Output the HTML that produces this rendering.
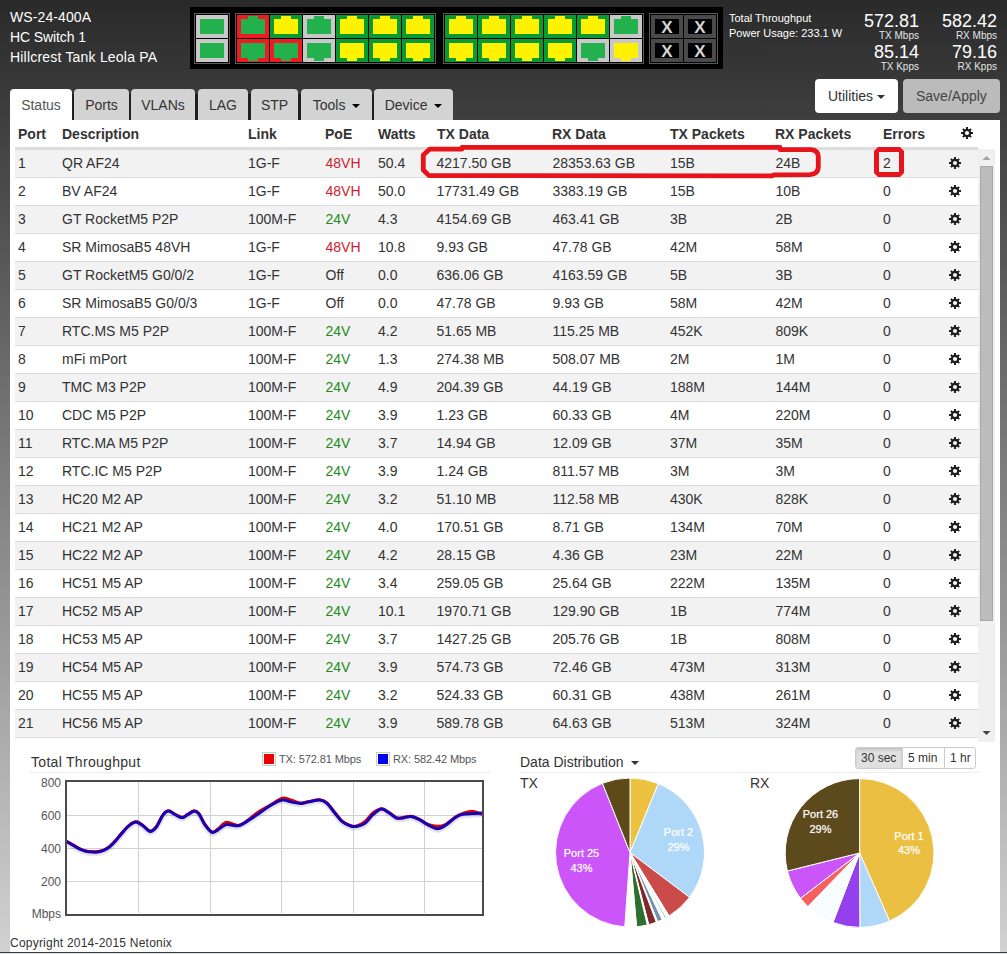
<!DOCTYPE html><html><head><meta charset="utf-8"><style>
*{box-sizing:border-box}
html,body{margin:0;padding:0}
body{width:1007px;height:954px;overflow:hidden;position:relative;font-family:"Liberation Sans",sans-serif;
background:linear-gradient(to bottom,#2a2a2a 0px,#d2d2d2 954px);}
.t{position:absolute;white-space:nowrap;line-height:20px}
.panel{position:absolute;left:190px;top:7px;width:533px;height:62px;background:#000}
.grp{position:absolute;top:13px;height:51px;border:1px solid #5a5a5a}
.cell{position:absolute;width:32px;height:23px}
.body{position:absolute;left:4px;top:4px;width:24px;height:15px}
.tab{position:absolute}
.x{position:absolute;left:4px;top:4px;width:24px;height:15px;background:#000;color:#d4d4d4;font:bold 17px/17px "Liberation Sans";text-align:center;overflow:visible}
.hdr{position:absolute;top:0;font-weight:bold;font-size:14px;color:#333}
.tabs{position:absolute;top:89px;left:10px;height:31px}
.tb{position:absolute;top:89px;height:31px;background:#d3d3d3;border-radius:4px 4px 0 0;color:#333;font-size:14px;line-height:20px;padding-top:6px;text-align:center}
.caret{display:inline-block;width:0;height:0;border-top:4px solid #000;border-left:4px solid transparent;border-right:4px solid transparent;vertical-align:middle;margin-left:2px;position:relative;top:0px}
.row{position:absolute;left:15px;width:963px;height:28px;border-bottom:1px solid #dddddd}
.row .t{top:4px;font-size:14px;color:#333}
</style></head><body>
<div class="t" style="left:10px;top:7px;font-size:14px;color:#fff;letter-spacing:0.1px">WS-24-400A</div>
<div class="t" style="left:10px;top:27px;font-size:14px;color:#fff;letter-spacing:-0.1px">HC Switch 1</div>
<div class="t" style="left:10px;top:47px;font-size:14px;color:#fff;letter-spacing:0.2px">Hillcrest Tank Leola PA</div>
<div class="panel"></div>
<div class="grp" style="left:194px;width:36px"></div>
<div class="grp" style="left:235px;width:201px"></div>
<div class="grp" style="left:443px;width:201px"></div>
<div class="grp" style="left:649px;width:69px"></div>
<div class="cell" style="left:196px;top:15px;background:#c8c8c8"><div class="body" style="background:#22b14c"></div></div>
<div class="cell" style="left:196px;top:39px;background:#c8c8c8"><div class="body" style="background:#22b14c"></div></div>
<div class="cell" style="left:237px;top:15px;background:#ed1c24"><div class="body" style="background:#22b14c"></div><div class="tab" style="left:11px;top:1px;width:10px;height:3px;background:#22b14c"></div></div>
<div class="cell" style="left:237px;top:39px;background:#ed1c24"><div class="body" style="background:#22b14c"></div><div class="tab" style="left:11px;top:19px;width:10px;height:3px;background:#22b14c"></div></div>
<div class="cell" style="left:445px;top:15px;background:#0a9a30"><div class="body" style="background:#fff200"></div><div class="tab" style="left:11px;top:1px;width:10px;height:3px;background:#fff200"></div></div>
<div class="cell" style="left:445px;top:39px;background:#0a9a30"><div class="body" style="background:#fff200"></div><div class="tab" style="left:11px;top:19px;width:10px;height:3px;background:#fff200"></div></div>
<div class="cell" style="left:270px;top:15px;background:#0a9a30"><div class="body" style="background:#fff200"></div><div class="tab" style="left:11px;top:1px;width:10px;height:3px;background:#fff200"></div></div>
<div class="cell" style="left:270px;top:39px;background:#ed1c24"><div class="body" style="background:#22b14c"></div><div class="tab" style="left:11px;top:19px;width:10px;height:3px;background:#22b14c"></div></div>
<div class="cell" style="left:478px;top:15px;background:#0a9a30"><div class="body" style="background:#fff200"></div><div class="tab" style="left:11px;top:1px;width:10px;height:3px;background:#fff200"></div></div>
<div class="cell" style="left:478px;top:39px;background:#0a9a30"><div class="body" style="background:#fff200"></div><div class="tab" style="left:11px;top:19px;width:10px;height:3px;background:#fff200"></div></div>
<div class="cell" style="left:303px;top:15px;background:#c8c8c8"><div class="body" style="background:#22b14c"></div><div class="tab" style="left:11px;top:1px;width:10px;height:3px;background:#22b14c"></div></div>
<div class="cell" style="left:303px;top:39px;background:#c8c8c8"><div class="body" style="background:#22b14c"></div><div class="tab" style="left:11px;top:19px;width:10px;height:3px;background:#22b14c"></div></div>
<div class="cell" style="left:511px;top:15px;background:#0a9a30"><div class="body" style="background:#fff200"></div><div class="tab" style="left:11px;top:1px;width:10px;height:3px;background:#fff200"></div></div>
<div class="cell" style="left:511px;top:39px;background:#0a9a30"><div class="body" style="background:#fff200"></div><div class="tab" style="left:11px;top:19px;width:10px;height:3px;background:#fff200"></div></div>
<div class="cell" style="left:336px;top:15px;background:#0a9a30"><div class="body" style="background:#fff200"></div><div class="tab" style="left:11px;top:1px;width:10px;height:3px;background:#fff200"></div></div>
<div class="cell" style="left:336px;top:39px;background:#0a9a30"><div class="body" style="background:#fff200"></div><div class="tab" style="left:11px;top:19px;width:10px;height:3px;background:#fff200"></div></div>
<div class="cell" style="left:544px;top:15px;background:#0a9a30"><div class="body" style="background:#fff200"></div><div class="tab" style="left:11px;top:1px;width:10px;height:3px;background:#fff200"></div></div>
<div class="cell" style="left:544px;top:39px;background:#0a9a30"><div class="body" style="background:#fff200"></div><div class="tab" style="left:11px;top:19px;width:10px;height:3px;background:#fff200"></div></div>
<div class="cell" style="left:369px;top:15px;background:#0a9a30"><div class="body" style="background:#fff200"></div><div class="tab" style="left:11px;top:1px;width:10px;height:3px;background:#fff200"></div></div>
<div class="cell" style="left:369px;top:39px;background:#0a9a30"><div class="body" style="background:#fff200"></div><div class="tab" style="left:11px;top:19px;width:10px;height:3px;background:#fff200"></div></div>
<div class="cell" style="left:577px;top:15px;background:#0a9a30"><div class="body" style="background:#fff200"></div><div class="tab" style="left:11px;top:1px;width:10px;height:3px;background:#fff200"></div></div>
<div class="cell" style="left:577px;top:39px;background:#c8c8c8"><div class="body" style="background:#22b14c"></div><div class="tab" style="left:11px;top:19px;width:10px;height:3px;background:#22b14c"></div></div>
<div class="cell" style="left:402px;top:15px;background:#0a9a30"><div class="body" style="background:#fff200"></div><div class="tab" style="left:11px;top:1px;width:10px;height:3px;background:#fff200"></div></div>
<div class="cell" style="left:402px;top:39px;background:#0a9a30"><div class="body" style="background:#fff200"></div><div class="tab" style="left:11px;top:19px;width:10px;height:3px;background:#fff200"></div></div>
<div class="cell" style="left:610px;top:15px;background:#c8c8c8"><div class="body" style="background:#22b14c"></div><div class="tab" style="left:11px;top:1px;width:10px;height:3px;background:#22b14c"></div></div>
<div class="cell" style="left:610px;top:39px;background:#c8c8c8"><div class="body" style="background:#fff200"></div><div class="tab" style="left:11px;top:19px;width:10px;height:3px;background:#fff200"></div></div>
<div class="cell" style="left:651px;top:15px;background:#4a4a4a"><div class="x">X</div></div>
<div class="cell" style="left:651px;top:39px;background:#4a4a4a"><div class="x">X</div></div>
<div class="cell" style="left:684px;top:15px;background:#4a4a4a"><div class="x">X</div></div>
<div class="cell" style="left:684px;top:39px;background:#4a4a4a"><div class="x">X</div></div>
<div class="t" style="left:729px;top:8px;font-size:11px;color:#fff">Total Throughput</div>
<div class="t" style="left:729px;top:23px;font-size:11px;color:#fff">Power Usage: 233.1 W</div>
<div class="t" style="right:88px;top:11px;font-size:18px;color:#fff;text-align:right">572.81</div>
<div class="t" style="right:10px;top:11px;font-size:18px;color:#fff;text-align:right">582.42</div>
<div class="t" style="right:88px;top:26px;font-size:10px;color:#e0e6e6;text-align:right">TX Mbps</div>
<div class="t" style="right:10px;top:26px;font-size:10px;color:#e0e6e6;text-align:right">RX Mbps</div>
<div class="t" style="right:88px;top:42px;font-size:18px;color:#fff;text-align:right">85.14</div>
<div class="t" style="right:10px;top:42px;font-size:18px;color:#fff;text-align:right">79.16</div>
<div class="t" style="right:88px;top:57px;font-size:10px;color:#e0e6e6;text-align:right">TX Kpps</div>
<div class="t" style="right:10px;top:57px;font-size:10px;color:#e0e6e6;text-align:right">RX Kpps</div>
<div style="position:absolute;left:815px;top:79px;width:83px;height:34px;background:#fff;border-radius:4px"></div>
<div class="t" style="left:828px;top:86px;font-size:14px;color:#333">Utilities <span class="caret" style="border-top-color:#333;margin-left:0px"></span></div>
<div style="position:absolute;left:903px;top:79px;width:97px;height:34px;background:#bbbbbb;border-radius:4px"></div>
<div class="t" style="left:916px;top:86px;font-size:14px;color:#444">Save/Apply</div>
<div style="position:absolute;left:10px;top:120px;width:990px;height:832px;background:#fff"></div>
<div style="position:absolute;left:12px;top:94px;width:439px;height:26px;background:#1f1f1f"></div>
<div class="tb" style="left:10px;width:62px;background:#fff;color:#555">Status</div>
<div class="tb" style="left:74px;width:55px;background:#d3d3d3;color:#333">Ports</div>
<div class="tb" style="left:131px;width:64px;background:#d3d3d3;color:#333">VLANs</div>
<div class="tb" style="left:198px;width:50px;background:#d3d3d3;color:#333">LAG</div>
<div class="tb" style="left:251px;width:47px;background:#d3d3d3;color:#333">STP</div>
<div class="tb" style="left:301px;width:71px;background:#d3d3d3;color:#333">Tools <span class="caret" style="margin-left:3px"></span></div>
<div class="tb" style="left:374px;width:79px;background:#d3d3d3;color:#333">Device <span class="caret" style="margin-left:3px"></span></div>
<div class="t" style="left:18px;top:124px;font-size:14px;font-weight:bold;color:#333">Port</div>
<div class="t" style="left:62px;top:124px;font-size:14px;font-weight:bold;color:#333">Description</div>
<div class="t" style="left:248px;top:124px;font-size:14px;font-weight:bold;color:#333">Link</div>
<div class="t" style="left:325px;top:124px;font-size:14px;font-weight:bold;color:#333">PoE</div>
<div class="t" style="left:378px;top:124px;font-size:14px;font-weight:bold;color:#333">Watts</div>
<div class="t" style="left:437px;top:124px;font-size:14px;font-weight:bold;color:#333">TX Data</div>
<div class="t" style="left:552px;top:124px;font-size:14px;font-weight:bold;color:#333">RX Data</div>
<div class="t" style="left:670px;top:124px;font-size:14px;font-weight:bold;color:#333">TX Packets</div>
<div class="t" style="left:775px;top:124px;font-size:14px;font-weight:bold;color:#333">RX Packets</div>
<div class="t" style="left:883px;top:124px;font-size:14px;font-weight:bold;color:#333">Errors</div>
<div style="position:absolute;left:15px;top:147px;width:963px;height:3px;background:#dddddd"></div>
<svg width="0" height="0" style="position:absolute"><defs><mask id="gm" maskUnits="userSpaceOnUse" x="-6" y="-6" width="12" height="12"><rect x="-6" y="-6" width="12" height="12" fill="#fff"/><circle r="2.1" fill="#000"/></mask><g id="gear" mask="url(#gm)" fill="#1e1e1e"><circle r="4.3"/><rect x="-1" y="-6" width="2" height="12"/><rect x="-6" y="-1" width="12" height="2"/><rect x="-1" y="-5.8" width="2" height="11.6" transform="rotate(45)"/><rect x="-1" y="-5.8" width="2" height="11.6" transform="rotate(-45)"/></g></defs></svg>
<div style="position:absolute;left:15px;top:150px;width:963px;height:28px;background:#f2f2f2;border-bottom:1px solid #dddddd"></div>
<div class="t" style="left:18px;top:153px;font-size:14px;color:#333">1</div>
<div class="t" style="left:62px;top:153px;font-size:14px;color:#333">QR AF24</div>
<div class="t" style="left:248px;top:153px;font-size:14px;color:#333">1G-F</div>
<div class="t" style="left:325.5px;top:153px;font-size:14px;color:#cc2233">48VH</div>
<div class="t" style="left:378px;top:153px;font-size:14px;color:#333">50.4</div>
<div class="t" style="left:436.5px;top:153px;font-size:14px;color:#333">4217.50 GB</div>
<div class="t" style="left:552.5px;top:153px;font-size:14px;color:#333">28353.63 GB</div>
<div class="t" style="left:670px;top:153px;font-size:14px;color:#333">15B</div>
<div class="t" style="left:775.5px;top:153px;font-size:14px;color:#333">24B</div>
<div class="t" style="left:883px;top:153px;font-size:14px;color:#333">2</div>
<svg style="position:absolute;left:949px;top:157px" width="12" height="12" viewBox="-6 -6 12 12"><use href="#gear"/></svg>
<div style="position:absolute;left:15px;top:178px;width:963px;height:28px;background:#fff;border-bottom:1px solid #dddddd"></div>
<div class="t" style="left:18px;top:181px;font-size:14px;color:#333">2</div>
<div class="t" style="left:62px;top:181px;font-size:14px;color:#333">BV AF24</div>
<div class="t" style="left:248px;top:181px;font-size:14px;color:#333">1G-F</div>
<div class="t" style="left:325.5px;top:181px;font-size:14px;color:#cc2233">48VH</div>
<div class="t" style="left:378px;top:181px;font-size:14px;color:#333">50.0</div>
<div class="t" style="left:436.5px;top:181px;font-size:14px;color:#333">17731.49 GB</div>
<div class="t" style="left:552.5px;top:181px;font-size:14px;color:#333">3383.19 GB</div>
<div class="t" style="left:670px;top:181px;font-size:14px;color:#333">15B</div>
<div class="t" style="left:775.5px;top:181px;font-size:14px;color:#333">10B</div>
<div class="t" style="left:883px;top:181px;font-size:14px;color:#333">0</div>
<svg style="position:absolute;left:949px;top:185px" width="12" height="12" viewBox="-6 -6 12 12"><use href="#gear"/></svg>
<div style="position:absolute;left:15px;top:206px;width:963px;height:28px;background:#f2f2f2;border-bottom:1px solid #dddddd"></div>
<div class="t" style="left:18px;top:209px;font-size:14px;color:#333">3</div>
<div class="t" style="left:62px;top:209px;font-size:14px;color:#333">GT RocketM5 P2P</div>
<div class="t" style="left:248px;top:209px;font-size:14px;color:#333">100M-F</div>
<div class="t" style="left:325.5px;top:209px;font-size:14px;color:#1f8a1f">24V</div>
<div class="t" style="left:378px;top:209px;font-size:14px;color:#333">4.3</div>
<div class="t" style="left:436.5px;top:209px;font-size:14px;color:#333">4154.69 GB</div>
<div class="t" style="left:552.5px;top:209px;font-size:14px;color:#333">463.41 GB</div>
<div class="t" style="left:670px;top:209px;font-size:14px;color:#333">3B</div>
<div class="t" style="left:775.5px;top:209px;font-size:14px;color:#333">2B</div>
<div class="t" style="left:883px;top:209px;font-size:14px;color:#333">0</div>
<svg style="position:absolute;left:949px;top:213px" width="12" height="12" viewBox="-6 -6 12 12"><use href="#gear"/></svg>
<div style="position:absolute;left:15px;top:234px;width:963px;height:28px;background:#fff;border-bottom:1px solid #dddddd"></div>
<div class="t" style="left:18px;top:237px;font-size:14px;color:#333">4</div>
<div class="t" style="left:62px;top:237px;font-size:14px;color:#333">SR MimosaB5 48VH</div>
<div class="t" style="left:248px;top:237px;font-size:14px;color:#333">1G-F</div>
<div class="t" style="left:325.5px;top:237px;font-size:14px;color:#cc2233">48VH</div>
<div class="t" style="left:378px;top:237px;font-size:14px;color:#333">10.8</div>
<div class="t" style="left:436.5px;top:237px;font-size:14px;color:#333">9.93 GB</div>
<div class="t" style="left:552.5px;top:237px;font-size:14px;color:#333">47.78 GB</div>
<div class="t" style="left:670px;top:237px;font-size:14px;color:#333">42M</div>
<div class="t" style="left:775.5px;top:237px;font-size:14px;color:#333">58M</div>
<div class="t" style="left:883px;top:237px;font-size:14px;color:#333">0</div>
<svg style="position:absolute;left:949px;top:241px" width="12" height="12" viewBox="-6 -6 12 12"><use href="#gear"/></svg>
<div style="position:absolute;left:15px;top:262px;width:963px;height:28px;background:#f2f2f2;border-bottom:1px solid #dddddd"></div>
<div class="t" style="left:18px;top:265px;font-size:14px;color:#333">5</div>
<div class="t" style="left:62px;top:265px;font-size:14px;color:#333">GT RocketM5 G0/0/2</div>
<div class="t" style="left:248px;top:265px;font-size:14px;color:#333">1G-F</div>
<div class="t" style="left:325.5px;top:265px;font-size:14px;color:#333">Off</div>
<div class="t" style="left:378px;top:265px;font-size:14px;color:#333">0.0</div>
<div class="t" style="left:436.5px;top:265px;font-size:14px;color:#333">636.06 GB</div>
<div class="t" style="left:552.5px;top:265px;font-size:14px;color:#333">4163.59 GB</div>
<div class="t" style="left:670px;top:265px;font-size:14px;color:#333">5B</div>
<div class="t" style="left:775.5px;top:265px;font-size:14px;color:#333">3B</div>
<div class="t" style="left:883px;top:265px;font-size:14px;color:#333">0</div>
<svg style="position:absolute;left:949px;top:269px" width="12" height="12" viewBox="-6 -6 12 12"><use href="#gear"/></svg>
<div style="position:absolute;left:15px;top:290px;width:963px;height:28px;background:#fff;border-bottom:1px solid #dddddd"></div>
<div class="t" style="left:18px;top:293px;font-size:14px;color:#333">6</div>
<div class="t" style="left:62px;top:293px;font-size:14px;color:#333">SR MimosaB5 G0/0/3</div>
<div class="t" style="left:248px;top:293px;font-size:14px;color:#333">1G-F</div>
<div class="t" style="left:325.5px;top:293px;font-size:14px;color:#333">Off</div>
<div class="t" style="left:378px;top:293px;font-size:14px;color:#333">0.0</div>
<div class="t" style="left:436.5px;top:293px;font-size:14px;color:#333">47.78 GB</div>
<div class="t" style="left:552.5px;top:293px;font-size:14px;color:#333">9.93 GB</div>
<div class="t" style="left:670px;top:293px;font-size:14px;color:#333">58M</div>
<div class="t" style="left:775.5px;top:293px;font-size:14px;color:#333">42M</div>
<div class="t" style="left:883px;top:293px;font-size:14px;color:#333">0</div>
<svg style="position:absolute;left:949px;top:297px" width="12" height="12" viewBox="-6 -6 12 12"><use href="#gear"/></svg>
<div style="position:absolute;left:15px;top:318px;width:963px;height:28px;background:#f2f2f2;border-bottom:1px solid #dddddd"></div>
<div class="t" style="left:18px;top:321px;font-size:14px;color:#333">7</div>
<div class="t" style="left:62px;top:321px;font-size:14px;color:#333">RTC.MS M5 P2P</div>
<div class="t" style="left:248px;top:321px;font-size:14px;color:#333">100M-F</div>
<div class="t" style="left:325.5px;top:321px;font-size:14px;color:#1f8a1f">24V</div>
<div class="t" style="left:378px;top:321px;font-size:14px;color:#333">4.2</div>
<div class="t" style="left:436.5px;top:321px;font-size:14px;color:#333">51.65 MB</div>
<div class="t" style="left:552.5px;top:321px;font-size:14px;color:#333">115.25 MB</div>
<div class="t" style="left:670px;top:321px;font-size:14px;color:#333">452K</div>
<div class="t" style="left:775.5px;top:321px;font-size:14px;color:#333">809K</div>
<div class="t" style="left:883px;top:321px;font-size:14px;color:#333">0</div>
<svg style="position:absolute;left:949px;top:325px" width="12" height="12" viewBox="-6 -6 12 12"><use href="#gear"/></svg>
<div style="position:absolute;left:15px;top:346px;width:963px;height:28px;background:#fff;border-bottom:1px solid #dddddd"></div>
<div class="t" style="left:18px;top:349px;font-size:14px;color:#333">8</div>
<div class="t" style="left:62px;top:349px;font-size:14px;color:#333">mFi mPort</div>
<div class="t" style="left:248px;top:349px;font-size:14px;color:#333">100M-F</div>
<div class="t" style="left:325.5px;top:349px;font-size:14px;color:#1f8a1f">24V</div>
<div class="t" style="left:378px;top:349px;font-size:14px;color:#333">1.3</div>
<div class="t" style="left:436.5px;top:349px;font-size:14px;color:#333">274.38 MB</div>
<div class="t" style="left:552.5px;top:349px;font-size:14px;color:#333">508.07 MB</div>
<div class="t" style="left:670px;top:349px;font-size:14px;color:#333">2M</div>
<div class="t" style="left:775.5px;top:349px;font-size:14px;color:#333">1M</div>
<div class="t" style="left:883px;top:349px;font-size:14px;color:#333">0</div>
<svg style="position:absolute;left:949px;top:353px" width="12" height="12" viewBox="-6 -6 12 12"><use href="#gear"/></svg>
<div style="position:absolute;left:15px;top:374px;width:963px;height:28px;background:#f2f2f2;border-bottom:1px solid #dddddd"></div>
<div class="t" style="left:18px;top:377px;font-size:14px;color:#333">9</div>
<div class="t" style="left:62px;top:377px;font-size:14px;color:#333">TMC M3 P2P</div>
<div class="t" style="left:248px;top:377px;font-size:14px;color:#333">100M-F</div>
<div class="t" style="left:325.5px;top:377px;font-size:14px;color:#1f8a1f">24V</div>
<div class="t" style="left:378px;top:377px;font-size:14px;color:#333">4.9</div>
<div class="t" style="left:436.5px;top:377px;font-size:14px;color:#333">204.39 GB</div>
<div class="t" style="left:552.5px;top:377px;font-size:14px;color:#333">44.19 GB</div>
<div class="t" style="left:670px;top:377px;font-size:14px;color:#333">188M</div>
<div class="t" style="left:775.5px;top:377px;font-size:14px;color:#333">144M</div>
<div class="t" style="left:883px;top:377px;font-size:14px;color:#333">0</div>
<svg style="position:absolute;left:949px;top:381px" width="12" height="12" viewBox="-6 -6 12 12"><use href="#gear"/></svg>
<div style="position:absolute;left:15px;top:402px;width:963px;height:28px;background:#fff;border-bottom:1px solid #dddddd"></div>
<div class="t" style="left:18px;top:405px;font-size:14px;color:#333">10</div>
<div class="t" style="left:62px;top:405px;font-size:14px;color:#333">CDC M5 P2P</div>
<div class="t" style="left:248px;top:405px;font-size:14px;color:#333">100M-F</div>
<div class="t" style="left:325.5px;top:405px;font-size:14px;color:#1f8a1f">24V</div>
<div class="t" style="left:378px;top:405px;font-size:14px;color:#333">3.9</div>
<div class="t" style="left:436.5px;top:405px;font-size:14px;color:#333">1.23 GB</div>
<div class="t" style="left:552.5px;top:405px;font-size:14px;color:#333">60.33 GB</div>
<div class="t" style="left:670px;top:405px;font-size:14px;color:#333">4M</div>
<div class="t" style="left:775.5px;top:405px;font-size:14px;color:#333">220M</div>
<div class="t" style="left:883px;top:405px;font-size:14px;color:#333">0</div>
<svg style="position:absolute;left:949px;top:409px" width="12" height="12" viewBox="-6 -6 12 12"><use href="#gear"/></svg>
<div style="position:absolute;left:15px;top:430px;width:963px;height:28px;background:#f2f2f2;border-bottom:1px solid #dddddd"></div>
<div class="t" style="left:18px;top:433px;font-size:14px;color:#333">11</div>
<div class="t" style="left:62px;top:433px;font-size:14px;color:#333">RTC.MA M5 P2P</div>
<div class="t" style="left:248px;top:433px;font-size:14px;color:#333">100M-F</div>
<div class="t" style="left:325.5px;top:433px;font-size:14px;color:#1f8a1f">24V</div>
<div class="t" style="left:378px;top:433px;font-size:14px;color:#333">3.7</div>
<div class="t" style="left:436.5px;top:433px;font-size:14px;color:#333">14.94 GB</div>
<div class="t" style="left:552.5px;top:433px;font-size:14px;color:#333">12.09 GB</div>
<div class="t" style="left:670px;top:433px;font-size:14px;color:#333">37M</div>
<div class="t" style="left:775.5px;top:433px;font-size:14px;color:#333">35M</div>
<div class="t" style="left:883px;top:433px;font-size:14px;color:#333">0</div>
<svg style="position:absolute;left:949px;top:437px" width="12" height="12" viewBox="-6 -6 12 12"><use href="#gear"/></svg>
<div style="position:absolute;left:15px;top:458px;width:963px;height:28px;background:#fff;border-bottom:1px solid #dddddd"></div>
<div class="t" style="left:18px;top:461px;font-size:14px;color:#333">12</div>
<div class="t" style="left:62px;top:461px;font-size:14px;color:#333">RTC.IC M5 P2P</div>
<div class="t" style="left:248px;top:461px;font-size:14px;color:#333">100M-F</div>
<div class="t" style="left:325.5px;top:461px;font-size:14px;color:#1f8a1f">24V</div>
<div class="t" style="left:378px;top:461px;font-size:14px;color:#333">3.9</div>
<div class="t" style="left:436.5px;top:461px;font-size:14px;color:#333">1.24 GB</div>
<div class="t" style="left:552.5px;top:461px;font-size:14px;color:#333">811.57 MB</div>
<div class="t" style="left:670px;top:461px;font-size:14px;color:#333">3M</div>
<div class="t" style="left:775.5px;top:461px;font-size:14px;color:#333">3M</div>
<div class="t" style="left:883px;top:461px;font-size:14px;color:#333">0</div>
<svg style="position:absolute;left:949px;top:465px" width="12" height="12" viewBox="-6 -6 12 12"><use href="#gear"/></svg>
<div style="position:absolute;left:15px;top:486px;width:963px;height:28px;background:#f2f2f2;border-bottom:1px solid #dddddd"></div>
<div class="t" style="left:18px;top:489px;font-size:14px;color:#333">13</div>
<div class="t" style="left:62px;top:489px;font-size:14px;color:#333">HC20 M2 AP</div>
<div class="t" style="left:248px;top:489px;font-size:14px;color:#333">100M-F</div>
<div class="t" style="left:325.5px;top:489px;font-size:14px;color:#1f8a1f">24V</div>
<div class="t" style="left:378px;top:489px;font-size:14px;color:#333">3.2</div>
<div class="t" style="left:436.5px;top:489px;font-size:14px;color:#333">51.10 MB</div>
<div class="t" style="left:552.5px;top:489px;font-size:14px;color:#333">112.58 MB</div>
<div class="t" style="left:670px;top:489px;font-size:14px;color:#333">430K</div>
<div class="t" style="left:775.5px;top:489px;font-size:14px;color:#333">828K</div>
<div class="t" style="left:883px;top:489px;font-size:14px;color:#333">0</div>
<svg style="position:absolute;left:949px;top:493px" width="12" height="12" viewBox="-6 -6 12 12"><use href="#gear"/></svg>
<div style="position:absolute;left:15px;top:514px;width:963px;height:28px;background:#fff;border-bottom:1px solid #dddddd"></div>
<div class="t" style="left:18px;top:517px;font-size:14px;color:#333">14</div>
<div class="t" style="left:62px;top:517px;font-size:14px;color:#333">HC21 M2 AP</div>
<div class="t" style="left:248px;top:517px;font-size:14px;color:#333">100M-F</div>
<div class="t" style="left:325.5px;top:517px;font-size:14px;color:#1f8a1f">24V</div>
<div class="t" style="left:378px;top:517px;font-size:14px;color:#333">4.0</div>
<div class="t" style="left:436.5px;top:517px;font-size:14px;color:#333">170.51 GB</div>
<div class="t" style="left:552.5px;top:517px;font-size:14px;color:#333">8.71 GB</div>
<div class="t" style="left:670px;top:517px;font-size:14px;color:#333">134M</div>
<div class="t" style="left:775.5px;top:517px;font-size:14px;color:#333">70M</div>
<div class="t" style="left:883px;top:517px;font-size:14px;color:#333">0</div>
<svg style="position:absolute;left:949px;top:521px" width="12" height="12" viewBox="-6 -6 12 12"><use href="#gear"/></svg>
<div style="position:absolute;left:15px;top:542px;width:963px;height:28px;background:#f2f2f2;border-bottom:1px solid #dddddd"></div>
<div class="t" style="left:18px;top:545px;font-size:14px;color:#333">15</div>
<div class="t" style="left:62px;top:545px;font-size:14px;color:#333">HC22 M2 AP</div>
<div class="t" style="left:248px;top:545px;font-size:14px;color:#333">100M-F</div>
<div class="t" style="left:325.5px;top:545px;font-size:14px;color:#1f8a1f">24V</div>
<div class="t" style="left:378px;top:545px;font-size:14px;color:#333">4.2</div>
<div class="t" style="left:436.5px;top:545px;font-size:14px;color:#333">28.15 GB</div>
<div class="t" style="left:552.5px;top:545px;font-size:14px;color:#333">4.36 GB</div>
<div class="t" style="left:670px;top:545px;font-size:14px;color:#333">23M</div>
<div class="t" style="left:775.5px;top:545px;font-size:14px;color:#333">22M</div>
<div class="t" style="left:883px;top:545px;font-size:14px;color:#333">0</div>
<svg style="position:absolute;left:949px;top:549px" width="12" height="12" viewBox="-6 -6 12 12"><use href="#gear"/></svg>
<div style="position:absolute;left:15px;top:570px;width:963px;height:28px;background:#fff;border-bottom:1px solid #dddddd"></div>
<div class="t" style="left:18px;top:573px;font-size:14px;color:#333">16</div>
<div class="t" style="left:62px;top:573px;font-size:14px;color:#333">HC51 M5 AP</div>
<div class="t" style="left:248px;top:573px;font-size:14px;color:#333">100M-F</div>
<div class="t" style="left:325.5px;top:573px;font-size:14px;color:#1f8a1f">24V</div>
<div class="t" style="left:378px;top:573px;font-size:14px;color:#333">3.4</div>
<div class="t" style="left:436.5px;top:573px;font-size:14px;color:#333">259.05 GB</div>
<div class="t" style="left:552.5px;top:573px;font-size:14px;color:#333">25.64 GB</div>
<div class="t" style="left:670px;top:573px;font-size:14px;color:#333">222M</div>
<div class="t" style="left:775.5px;top:573px;font-size:14px;color:#333">135M</div>
<div class="t" style="left:883px;top:573px;font-size:14px;color:#333">0</div>
<svg style="position:absolute;left:949px;top:577px" width="12" height="12" viewBox="-6 -6 12 12"><use href="#gear"/></svg>
<div style="position:absolute;left:15px;top:598px;width:963px;height:28px;background:#f2f2f2;border-bottom:1px solid #dddddd"></div>
<div class="t" style="left:18px;top:601px;font-size:14px;color:#333">17</div>
<div class="t" style="left:62px;top:601px;font-size:14px;color:#333">HC52 M5 AP</div>
<div class="t" style="left:248px;top:601px;font-size:14px;color:#333">100M-F</div>
<div class="t" style="left:325.5px;top:601px;font-size:14px;color:#1f8a1f">24V</div>
<div class="t" style="left:378px;top:601px;font-size:14px;color:#333">10.1</div>
<div class="t" style="left:436.5px;top:601px;font-size:14px;color:#333">1970.71 GB</div>
<div class="t" style="left:552.5px;top:601px;font-size:14px;color:#333">129.90 GB</div>
<div class="t" style="left:670px;top:601px;font-size:14px;color:#333">1B</div>
<div class="t" style="left:775.5px;top:601px;font-size:14px;color:#333">774M</div>
<div class="t" style="left:883px;top:601px;font-size:14px;color:#333">0</div>
<svg style="position:absolute;left:949px;top:605px" width="12" height="12" viewBox="-6 -6 12 12"><use href="#gear"/></svg>
<div style="position:absolute;left:15px;top:626px;width:963px;height:28px;background:#fff;border-bottom:1px solid #dddddd"></div>
<div class="t" style="left:18px;top:629px;font-size:14px;color:#333">18</div>
<div class="t" style="left:62px;top:629px;font-size:14px;color:#333">HC53 M5 AP</div>
<div class="t" style="left:248px;top:629px;font-size:14px;color:#333">100M-F</div>
<div class="t" style="left:325.5px;top:629px;font-size:14px;color:#1f8a1f">24V</div>
<div class="t" style="left:378px;top:629px;font-size:14px;color:#333">3.7</div>
<div class="t" style="left:436.5px;top:629px;font-size:14px;color:#333">1427.25 GB</div>
<div class="t" style="left:552.5px;top:629px;font-size:14px;color:#333">205.76 GB</div>
<div class="t" style="left:670px;top:629px;font-size:14px;color:#333">1B</div>
<div class="t" style="left:775.5px;top:629px;font-size:14px;color:#333">808M</div>
<div class="t" style="left:883px;top:629px;font-size:14px;color:#333">0</div>
<svg style="position:absolute;left:949px;top:633px" width="12" height="12" viewBox="-6 -6 12 12"><use href="#gear"/></svg>
<div style="position:absolute;left:15px;top:654px;width:963px;height:28px;background:#f2f2f2;border-bottom:1px solid #dddddd"></div>
<div class="t" style="left:18px;top:657px;font-size:14px;color:#333">19</div>
<div class="t" style="left:62px;top:657px;font-size:14px;color:#333">HC54 M5 AP</div>
<div class="t" style="left:248px;top:657px;font-size:14px;color:#333">100M-F</div>
<div class="t" style="left:325.5px;top:657px;font-size:14px;color:#1f8a1f">24V</div>
<div class="t" style="left:378px;top:657px;font-size:14px;color:#333">3.9</div>
<div class="t" style="left:436.5px;top:657px;font-size:14px;color:#333">574.73 GB</div>
<div class="t" style="left:552.5px;top:657px;font-size:14px;color:#333">72.46 GB</div>
<div class="t" style="left:670px;top:657px;font-size:14px;color:#333">473M</div>
<div class="t" style="left:775.5px;top:657px;font-size:14px;color:#333">313M</div>
<div class="t" style="left:883px;top:657px;font-size:14px;color:#333">0</div>
<svg style="position:absolute;left:949px;top:661px" width="12" height="12" viewBox="-6 -6 12 12"><use href="#gear"/></svg>
<div style="position:absolute;left:15px;top:682px;width:963px;height:28px;background:#fff;border-bottom:1px solid #dddddd"></div>
<div class="t" style="left:18px;top:685px;font-size:14px;color:#333">20</div>
<div class="t" style="left:62px;top:685px;font-size:14px;color:#333">HC55 M5 AP</div>
<div class="t" style="left:248px;top:685px;font-size:14px;color:#333">100M-F</div>
<div class="t" style="left:325.5px;top:685px;font-size:14px;color:#1f8a1f">24V</div>
<div class="t" style="left:378px;top:685px;font-size:14px;color:#333">3.2</div>
<div class="t" style="left:436.5px;top:685px;font-size:14px;color:#333">524.33 GB</div>
<div class="t" style="left:552.5px;top:685px;font-size:14px;color:#333">60.31 GB</div>
<div class="t" style="left:670px;top:685px;font-size:14px;color:#333">438M</div>
<div class="t" style="left:775.5px;top:685px;font-size:14px;color:#333">261M</div>
<div class="t" style="left:883px;top:685px;font-size:14px;color:#333">0</div>
<svg style="position:absolute;left:949px;top:689px" width="12" height="12" viewBox="-6 -6 12 12"><use href="#gear"/></svg>
<div style="position:absolute;left:15px;top:710px;width:963px;height:28px;background:#f2f2f2;border-bottom:1px solid #dddddd"></div>
<div class="t" style="left:18px;top:713px;font-size:14px;color:#333">21</div>
<div class="t" style="left:62px;top:713px;font-size:14px;color:#333">HC56 M5 AP</div>
<div class="t" style="left:248px;top:713px;font-size:14px;color:#333">100M-F</div>
<div class="t" style="left:325.5px;top:713px;font-size:14px;color:#1f8a1f">24V</div>
<div class="t" style="left:378px;top:713px;font-size:14px;color:#333">3.9</div>
<div class="t" style="left:436.5px;top:713px;font-size:14px;color:#333">589.78 GB</div>
<div class="t" style="left:552.5px;top:713px;font-size:14px;color:#333">64.63 GB</div>
<div class="t" style="left:670px;top:713px;font-size:14px;color:#333">513M</div>
<div class="t" style="left:775.5px;top:713px;font-size:14px;color:#333">324M</div>
<div class="t" style="left:883px;top:713px;font-size:14px;color:#333">0</div>
<svg style="position:absolute;left:949px;top:717px" width="12" height="12" viewBox="-6 -6 12 12"><use href="#gear"/></svg>
<svg style="position:absolute;left:961px;top:127px" width="12" height="12" viewBox="-6 -6 12 12"><use href="#gear"/></svg>
<div style="position:absolute;left:978px;top:149px;width:17px;height:593px;background:#f0f0f0"></div>
<div style="position:absolute;left:980px;top:166px;width:13px;height:455px;background:#bcbcbc;border:1px solid #a8a8a8"></div>
<svg style="position:absolute;left:982px;top:155px" width="9" height="6"><path d="M0.5,5 L4.5,1 L8.5,5z" fill="#a3a3a3"/></svg>
<svg style="position:absolute;left:982px;top:730px" width="9" height="6"><path d="M0.5,1 L8.5,1 L4.5,5z" fill="#404040"/></svg>
<div class="t" style="left:31px;top:752px;font-size:14px;color:#333;letter-spacing:0.3px">Total Throughput</div>
<div style="position:absolute;left:29px;top:772px;width:462px;height:1px;background:#eeeeee"></div>
<div style="position:absolute;left:262px;top:752px;width:14px;height:14px;border:1px solid #cccccc;background:#fff"><div style="position:absolute;left:1px;top:1px;width:10px;height:10px;background:#ee0000"></div></div>
<div class="t" style="left:279px;top:749px;font-size:11px;color:#555;letter-spacing:-0.1px">TX: 572.81 Mbps</div>
<div style="position:absolute;left:376px;top:752px;width:14px;height:14px;border:1px solid #cccccc;background:#fff"><div style="position:absolute;left:1px;top:1px;width:10px;height:10px;background:#0000ee"></div></div>
<div class="t" style="left:393px;top:749px;font-size:11px;color:#555;letter-spacing:-0.1px">RX: 582.42 Mbps</div>
<div class="t" style="right:946px;top:773px;font-size:12px;color:#555;text-align:right">800</div>
<div class="t" style="right:946px;top:806px;font-size:12px;color:#555;text-align:right">600</div>
<div class="t" style="right:946px;top:839px;font-size:12px;color:#555;text-align:right">400</div>
<div class="t" style="right:946px;top:872px;font-size:12px;color:#555;text-align:right">200</div>
<div class="t" style="right:946px;top:904px;font-size:12px;color:#555;text-align:right">Mbps</div>
<svg style="position:absolute;left:0;top:0" width="1007" height="954">
<line x1="67" y1="815.5" x2="482" y2="815.5" stroke="#d0d0d0" stroke-width="1"/>
<line x1="67" y1="848.5" x2="482" y2="848.5" stroke="#d0d0d0" stroke-width="1"/>
<line x1="67" y1="881.5" x2="482" y2="881.5" stroke="#d0d0d0" stroke-width="1"/>
<line x1="138.5" y1="782" x2="138.5" y2="913" stroke="#d0d0d0" stroke-width="1"/>
<line x1="210.5" y1="782" x2="210.5" y2="913" stroke="#d0d0d0" stroke-width="1"/>
<line x1="281.5" y1="782" x2="281.5" y2="913" stroke="#d0d0d0" stroke-width="1"/>
<line x1="353.5" y1="782" x2="353.5" y2="913" stroke="#d0d0d0" stroke-width="1"/>
<line x1="424.5" y1="782" x2="424.5" y2="913" stroke="#d0d0d0" stroke-width="1"/>
<clipPath id="cp"><rect x="67" y="782" width="415" height="131"/></clipPath>
<g clip-path="url(#cp)">
<path d="M66.5,841.6 C67.7,842.3 71.7,844.4 73.9,845.7 C76.1,847.0 77.9,848.3 79.9,849.2 C81.9,850.1 83.8,850.8 85.8,851.3 C87.8,851.8 89.8,851.9 91.8,852.0 C93.8,852.1 95.8,852.3 97.8,852.0 C99.8,851.7 101.7,851.3 103.7,850.4 C105.7,849.5 107.7,848.4 109.7,846.8 C111.7,845.2 113.6,843.1 115.6,840.9 C117.6,838.7 119.6,836.0 121.6,833.7 C123.6,831.4 125.6,828.8 127.6,827.0 C129.6,825.2 131.9,823.5 133.5,822.7 C135.1,821.9 135.5,821.7 137.1,822.2 C138.7,822.7 140.8,824.3 143.0,825.8 C145.2,827.3 148.0,831.2 150.2,831.4 C152.4,831.6 154.0,830.0 156.2,827.2 C158.4,824.4 161.2,817.4 163.3,814.7 C165.4,812.0 166.7,811.1 168.7,811.1 C170.7,811.1 172.9,813.6 175.2,814.7 C177.4,815.8 180.0,817.8 182.2,817.7 C184.3,817.7 186.1,815.5 188.1,814.4 C190.1,813.3 192.3,811.3 194.1,811.2 C195.9,811.1 197.0,811.6 198.8,813.8 C200.6,816.0 202.6,821.5 204.8,824.6 C207.0,827.7 209.8,831.4 212.0,832.3 C214.2,833.2 215.5,831.2 217.9,829.9 C220.3,828.6 222.9,825.3 226.3,824.6 C229.7,823.9 234.8,826.3 238.2,825.8 C241.6,825.3 243.1,823.6 246.5,821.6 C249.9,819.6 254.4,816.5 258.4,813.8 C262.4,811.1 266.4,807.8 270.4,805.5 C274.4,803.2 278.9,800.7 282.3,800.1 C285.7,799.5 288.0,801.3 291.0,801.9 C294.0,802.5 297.5,803.5 300.5,803.5 C303.5,803.5 305.6,802.5 308.8,801.9 C312.0,801.3 316.6,799.9 319.6,800.1 C322.6,800.3 324.1,800.9 326.7,803.1 C329.3,805.3 332.4,810.1 335.0,813.2 C337.6,816.3 339.6,819.5 342.2,821.6 C344.8,823.7 348.2,825.2 350.6,826.0 C353.0,826.8 354.1,826.8 356.5,826.4 C358.9,826.0 362.1,825.4 364.9,823.4 C367.7,821.4 370.4,816.8 373.2,814.4 C376.0,812.0 378.9,809.4 381.5,809.1 C384.1,808.8 386.1,811.1 388.7,812.6 C391.3,814.1 394.4,817.4 397.0,818.2 C399.6,819.1 401.9,818.0 404.2,817.7 C406.5,817.4 408.4,816.3 411.0,816.6 C413.6,816.9 416.7,818.3 419.5,819.7 C422.3,821.1 425.0,823.4 428.0,824.9 C431.0,826.4 434.5,828.7 437.5,828.7 C440.5,828.7 443.0,826.8 446.0,824.9 C449.0,823.0 452.6,819.2 455.4,817.4 C458.2,815.6 460.1,814.9 462.9,814.3 C465.7,813.7 469.2,813.8 472.4,813.6 C475.6,813.4 480.4,813.2 482.0,813.1" transform="translate(0,1.5)" fill="none" stroke="rgba(20,20,80,0.12)" stroke-width="5"/>
<path d="M66.5,841.6 C67.7,842.3 71.7,844.4 73.9,845.7 C76.1,847.0 77.9,848.3 79.9,849.2 C81.9,850.1 83.8,850.8 85.8,851.3 C87.8,851.8 89.8,851.9 91.8,852.0 C93.8,852.1 95.8,852.3 97.8,852.0 C99.8,851.7 101.7,851.3 103.7,850.4 C105.7,849.5 107.7,848.4 109.7,846.8 C111.7,845.2 113.6,843.1 115.6,840.9 C117.6,838.7 119.6,836.0 121.6,833.7 C123.6,831.4 125.6,828.8 127.6,827.0 C129.6,825.2 131.9,823.5 133.5,822.7 C135.1,821.9 135.5,821.7 137.1,822.2 C138.7,822.7 140.8,824.3 143.0,825.8 C145.2,827.3 148.0,831.2 150.2,831.4 C152.4,831.6 154.0,830.0 156.2,827.2 C158.4,824.4 161.2,817.4 163.3,814.7 C165.4,812.0 166.7,811.1 168.7,811.1 C170.7,811.1 172.9,813.6 175.2,814.7 C177.4,815.8 180.0,817.8 182.2,817.7 C184.3,817.7 186.1,815.5 188.1,814.4 C190.1,813.3 192.3,811.3 194.1,811.2 C195.9,811.1 197.0,811.6 198.8,813.8 C200.6,816.0 202.6,821.5 204.8,824.6 C207.0,827.7 209.8,831.5 212.0,832.3 C214.2,833.1 215.5,831.1 217.9,829.5 C220.3,827.9 222.9,823.3 226.3,822.7 C229.7,822.0 234.8,826.0 238.2,825.8 C241.6,825.6 243.1,823.8 246.5,821.6 C249.9,819.4 254.4,815.0 258.4,812.4 C262.4,809.7 266.4,807.8 270.4,805.5 C274.4,803.2 278.9,799.5 282.3,798.7 C285.7,797.8 288.0,799.6 291.0,800.4 C294.0,801.2 297.5,803.2 300.5,803.5 C303.5,803.8 305.6,802.5 308.8,801.9 C312.0,801.3 316.6,799.9 319.6,800.1 C322.6,800.3 324.1,800.9 326.7,803.1 C329.3,805.3 332.4,810.1 335.0,813.2 C337.6,816.3 339.6,819.5 342.2,821.6 C344.8,823.7 348.2,825.2 350.6,826.0 C353.0,826.8 354.1,827.0 356.5,826.4 C358.9,825.8 362.1,824.4 364.9,822.2 C367.7,820.0 370.4,815.4 373.2,813.2 C376.0,811.1 378.9,809.2 381.5,809.1 C384.1,809.0 386.1,811.1 388.7,812.6 C391.3,814.1 394.4,817.4 397.0,818.2 C399.6,819.1 401.9,818.0 404.2,817.7 C406.5,817.4 408.4,816.3 411.0,816.6 C413.6,816.9 416.7,818.3 419.5,819.7 C422.3,821.1 425.0,823.6 428.0,824.8 C431.0,826.0 434.5,826.7 437.5,826.7 C440.5,826.7 443.0,826.2 446.0,824.6 C449.0,823.0 452.6,819.2 455.4,817.4 C458.2,815.6 460.1,814.8 462.9,813.8 C465.7,812.9 469.2,811.5 472.4,811.7 C475.6,811.8 480.4,814.2 482.0,814.7" transform="translate(0,-0.4)" fill="none" stroke="#e00000" stroke-width="3" stroke-linejoin="round"/>
<path d="M66.5,841.6 C67.7,842.3 71.7,844.4 73.9,845.7 C76.1,847.0 77.9,848.3 79.9,849.2 C81.9,850.1 83.8,850.8 85.8,851.3 C87.8,851.8 89.8,851.9 91.8,852.0 C93.8,852.1 95.8,852.3 97.8,852.0 C99.8,851.7 101.7,851.3 103.7,850.4 C105.7,849.5 107.7,848.4 109.7,846.8 C111.7,845.2 113.6,843.1 115.6,840.9 C117.6,838.7 119.6,836.0 121.6,833.7 C123.6,831.4 125.6,828.8 127.6,827.0 C129.6,825.2 131.9,823.5 133.5,822.7 C135.1,821.9 135.5,821.7 137.1,822.2 C138.7,822.7 140.8,824.3 143.0,825.8 C145.2,827.3 148.0,831.2 150.2,831.4 C152.4,831.6 154.0,830.0 156.2,827.2 C158.4,824.4 161.2,817.4 163.3,814.7 C165.4,812.0 166.7,811.1 168.7,811.1 C170.7,811.1 172.9,813.6 175.2,814.7 C177.4,815.8 180.0,817.8 182.2,817.7 C184.3,817.7 186.1,815.5 188.1,814.4 C190.1,813.3 192.3,811.3 194.1,811.2 C195.9,811.1 197.0,811.6 198.8,813.8 C200.6,816.0 202.6,821.5 204.8,824.6 C207.0,827.7 209.8,831.4 212.0,832.3 C214.2,833.2 215.5,831.2 217.9,829.9 C220.3,828.6 222.9,825.3 226.3,824.6 C229.7,823.9 234.8,826.3 238.2,825.8 C241.6,825.3 243.1,823.6 246.5,821.6 C249.9,819.6 254.4,816.5 258.4,813.8 C262.4,811.1 266.4,807.8 270.4,805.5 C274.4,803.2 278.9,800.7 282.3,800.1 C285.7,799.5 288.0,801.3 291.0,801.9 C294.0,802.5 297.5,803.5 300.5,803.5 C303.5,803.5 305.6,802.5 308.8,801.9 C312.0,801.3 316.6,799.9 319.6,800.1 C322.6,800.3 324.1,800.9 326.7,803.1 C329.3,805.3 332.4,810.1 335.0,813.2 C337.6,816.3 339.6,819.5 342.2,821.6 C344.8,823.7 348.2,825.2 350.6,826.0 C353.0,826.8 354.1,826.8 356.5,826.4 C358.9,826.0 362.1,825.4 364.9,823.4 C367.7,821.4 370.4,816.8 373.2,814.4 C376.0,812.0 378.9,809.4 381.5,809.1 C384.1,808.8 386.1,811.1 388.7,812.6 C391.3,814.1 394.4,817.4 397.0,818.2 C399.6,819.1 401.9,818.0 404.2,817.7 C406.5,817.4 408.4,816.3 411.0,816.6 C413.6,816.9 416.7,818.3 419.5,819.7 C422.3,821.1 425.0,823.4 428.0,824.9 C431.0,826.4 434.5,828.7 437.5,828.7 C440.5,828.7 443.0,826.8 446.0,824.9 C449.0,823.0 452.6,819.2 455.4,817.4 C458.2,815.6 460.1,814.9 462.9,814.3 C465.7,813.7 469.2,813.8 472.4,813.6 C475.6,813.4 480.4,813.2 482.0,813.1" fill="none" stroke="#1a00b4" stroke-width="3" stroke-linejoin="round"/>
</g>
<rect x="66" y="781" width="417" height="134" fill="none" stroke="#4a4a4a" stroke-width="2"/>
<path d="M630,852.5 L630.00,778.00 A74.5,74.5 0 0 1 658.39,783.62 Z" fill="#edc240" stroke="#fff" stroke-width="1" stroke-linejoin="round"/>
<path d="M630,852.5 L658.39,783.62 A74.5,74.5 0 0 1 689.50,897.34 Z" fill="#afd8f8" stroke="#fff" stroke-width="1" stroke-linejoin="round"/>
<path d="M630,852.5 L689.50,897.34 A74.5,74.5 0 0 1 669.04,915.95 Z" fill="#cb4b4b" stroke="#fff" stroke-width="1" stroke-linejoin="round"/>
<path d="M630,852.5 L669.04,915.95 A74.5,74.5 0 0 1 666.12,917.66 Z" fill="#ffffff" stroke="#fff" stroke-width="1" stroke-linejoin="round"/>
<path d="M630,852.5 L666.12,917.66 A74.5,74.5 0 0 1 664.75,918.40 Z" fill="#4da74d" stroke="#fff" stroke-width="1" stroke-linejoin="round"/>
<path d="M630,852.5 L664.75,918.40 A74.5,74.5 0 0 1 662.19,919.69 Z" fill="#ffffff" stroke="#fff" stroke-width="1" stroke-linejoin="round"/>
<path d="M630,852.5 L662.19,919.69 A74.5,74.5 0 0 1 657.55,921.72 Z" fill="#7090ad" stroke="#fff" stroke-width="1" stroke-linejoin="round"/>
<path d="M630,852.5 L657.55,921.72 A74.5,74.5 0 0 1 656.33,922.19 Z" fill="#ffffff" stroke="#fff" stroke-width="1" stroke-linejoin="round"/>
<path d="M630,852.5 L656.33,922.19 A74.5,74.5 0 0 1 648.65,924.63 Z" fill="#7f2a2a" stroke="#fff" stroke-width="1" stroke-linejoin="round"/>
<path d="M630,852.5 L648.65,924.63 A74.5,74.5 0 0 1 647.27,924.97 Z" fill="#ffffff" stroke="#fff" stroke-width="1" stroke-linejoin="round"/>
<path d="M630,852.5 L647.27,924.97 A74.5,74.5 0 0 1 636.49,926.72 Z" fill="#2e6e2e" stroke="#fff" stroke-width="1" stroke-linejoin="round"/>
<path d="M630,852.5 L636.49,926.72 A74.5,74.5 0 0 1 624.80,926.82 Z" fill="#fbfdf7" stroke="#fff" stroke-width="1" stroke-linejoin="round"/>
<path d="M630,852.5 L624.80,926.82 A74.5,74.5 0 0 1 602.45,783.28 Z" fill="#cb55f8" stroke="#fff" stroke-width="1" stroke-linejoin="round"/>
<path d="M630,852.5 L602.45,783.28 A74.5,74.5 0 0 1 630.00,778.00 Z" fill="#5e4a18" stroke="#fff" stroke-width="1" stroke-linejoin="round"/>
<path d="M859.6,853 L859.60,778.60 A74.4,74.4 0 0 1 889.62,921.07 Z" fill="#ebc042" stroke="#fff" stroke-width="1" stroke-linejoin="round"/>
<path d="M859.6,853 L889.62,921.07 A74.4,74.4 0 0 1 859.86,927.40 Z" fill="#afd8f8" stroke="#fff" stroke-width="1" stroke-linejoin="round"/>
<path d="M859.6,853 L859.86,927.40 A74.4,74.4 0 0 1 832.94,922.46 Z" fill="#9440ed" stroke="#fff" stroke-width="1" stroke-linejoin="round"/>
<path d="M859.6,853 L832.94,922.46 A74.4,74.4 0 0 1 807.92,906.52 Z" fill="#f7fcfe" stroke="#fff" stroke-width="1" stroke-linejoin="round"/>
<path d="M859.6,853 L807.92,906.52 A74.4,74.4 0 0 1 800.57,898.29 Z" fill="#f56060" stroke="#fff" stroke-width="1" stroke-linejoin="round"/>
<path d="M859.6,853 L800.57,898.29 A74.4,74.4 0 0 1 787.41,871.00 Z" fill="#cb55f8" stroke="#fff" stroke-width="1" stroke-linejoin="round"/>
<path d="M859.6,853 L787.41,871.00 A74.4,74.4 0 0 1 859.60,778.60 Z" fill="#5c4a1c" stroke="#fff" stroke-width="1" stroke-linejoin="round"/>
</svg>
<div class="t" style="left:541.5px;width:80px;text-align:center;top:843px;font-size:11px;color:#fff;text-shadow:0 0 1px rgba(255,255,255,0.6)">Port 25</div>
<div class="t" style="left:541.5px;width:80px;text-align:center;top:858px;font-size:11px;color:#fff;text-shadow:0 0 1px rgba(255,255,255,0.6)">43%</div>
<div class="t" style="left:638.5px;width:80px;text-align:center;top:822px;font-size:11px;color:#fff;text-shadow:0 0 1px rgba(255,255,255,0.6)">Port 2</div>
<div class="t" style="left:638.5px;width:80px;text-align:center;top:837px;font-size:11px;color:#fff;text-shadow:0 0 1px rgba(255,255,255,0.6)">29%</div>
<div class="t" style="left:780.5px;width:80px;text-align:center;top:804px;font-size:11px;color:#fff;text-shadow:0 0 1px rgba(255,255,255,0.6)">Port 26</div>
<div class="t" style="left:780.5px;width:80px;text-align:center;top:819px;font-size:11px;color:#fff;text-shadow:0 0 1px rgba(255,255,255,0.6)">29%</div>
<div class="t" style="left:869px;width:80px;text-align:center;top:826px;font-size:11px;color:#fff;text-shadow:0 0 1px rgba(255,255,255,0.6)">Port 1</div>
<div class="t" style="left:869px;width:80px;text-align:center;top:840px;font-size:11px;color:#fff;text-shadow:0 0 1px rgba(255,255,255,0.6)">43%</div>
<div class="t" style="left:520px;top:752px;font-size:14px;color:#333">Data Distribution <span class="caret" style="border-top-color:#333;margin-left:4px"></span></div>
<div style="position:absolute;left:520px;top:772px;width:460px;height:1px;background:#eeeeee"></div>
<div class="t" style="left:520px;top:773px;font-size:14px;color:#333">TX</div>
<div class="t" style="left:750px;top:773px;font-size:14px;color:#333">RX</div>
<div style="position:absolute;left:855px;top:747px;width:121px;height:22px;border:1px solid #cccccc;border-radius:3px;background:#fff;overflow:hidden"><div style="position:absolute;left:0;top:0;width:47px;height:20px;background:#e0e0e0;box-shadow:inset 0 2px 3px rgba(0,0,0,.13);border-right:1px solid #cccccc"></div><div style="position:absolute;left:88px;top:0;width:1px;height:20px;background:#cccccc"></div></div>
<div class="t" style="left:861px;top:748px;font-size:12px;color:#333">30 sec</div>
<div class="t" style="left:908px;top:748px;font-size:12px;color:#333">5 min</div>
<div class="t" style="left:950px;top:748px;font-size:12px;color:#333">1 hr</div>
<div class="t" style="left:10px;top:933px;font-size:12px;color:#333;letter-spacing:0.22px">Copyright 2014-2015 Netonix</div>
<div style="position:absolute;left:0;top:952px;width:1007px;height:1px;background:#3a3a3a"></div>
<div style="position:absolute;left:0;top:953px;width:1007px;height:1px;background:#dfe3ea"></div>
<svg style="position:absolute;left:0;top:0" width="1007" height="954"><path d="M423.3,155 L423.3,170 L429,175.6 L772,175.8 L774,174.9 L810,174.6 Q818.3,174 818.3,167 L818.3,157 Q818.3,150 811,149.6 L780,149.5 L780,147.4 L462,147.4 L462,149 L429.5,149.2 Z" fill="none" stroke="#e8141c" stroke-width="4.8" stroke-linejoin="round"/><path fill-rule="evenodd" fill="#e8141c" d="M878,147 H900 L904,151 V173 L900,177 H878 L874,173 V151 Z M879,152 V172 H899 V152 Z"/></svg>
</body></html>
